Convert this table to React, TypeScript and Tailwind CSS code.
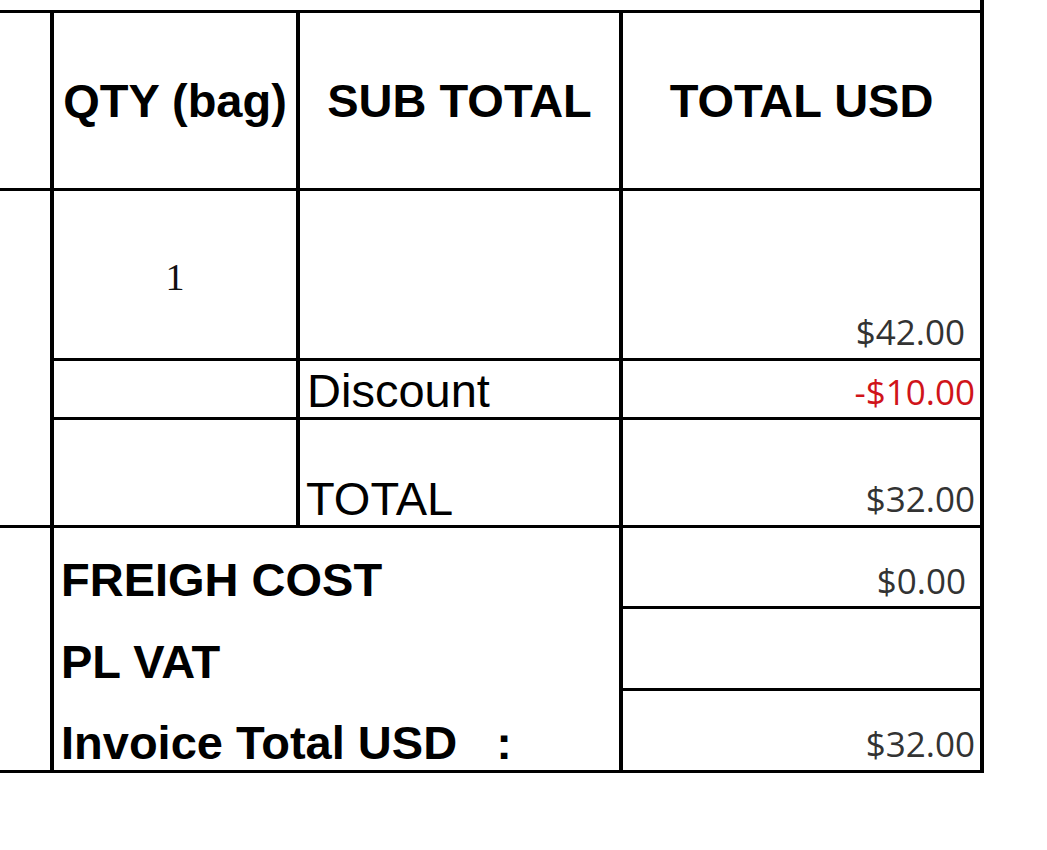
const head = "flex items-center justify-center bg-white font-['Liberation_Sans',Arial,sans-serif] text-[47px] font-bold leading-[46px] text-black";
const amount = "flex items-end justify-end bg-white font-['Open_Sans','Noto_Sans',sans-serif] text-[35px] leading-[35px] text-[#333]";
const label = "flex items-end bg-white font-['Liberation_Sans',Arial,sans-serif] text-[47px] leading-[46px] text-black";

export default function App() {
  return (
    <div className="min-h-[850px] bg-white">
      <div className="w-[984px] border-r-[4px] border-black pt-[10px]">
        <div className="grid grid-cols-[50px_242px_319px_357px] grid-rows-[175px_167px_56px_105px_78px_79px_79px] gap-x-[4px] gap-y-[3px] bg-black py-[3px]">
          {/* left strip */}
          <div className="bg-white" />
          <div className={head}>QTY (bag)</div>
          <div className={head}>SUB TOTAL</div>
          <div className={head}>TOTAL USD</div>

          <div className="row-span-3 bg-white" />
          <div className="flex justify-center bg-white pt-[67px] font-['Liberation_Serif','Times_New_Roman',serif] text-[38px] leading-[38px] text-[#111]">
            1
          </div>
          <div className="bg-white" />
          <div className={`${amount} pb-[9px] pr-[15px]`}>$42.00</div>

          <div className="bg-white" />
          <div className={`${label} pb-[3px] pl-[7px]`}>Discount</div>
          <div className={`${amount} pb-[8px] pr-[5px] text-[#d0141a]`}>-$10.00</div>

          <div className="bg-white" />
          <div className={`${label} pb-[3px] pl-[6px]`}>TOTAL</div>
          <div className={`${amount} pb-[9px] pr-[5px]`}>$32.00</div>

          {/* summary */}
          <div className="row-span-3 bg-white" />
          <div className="col-span-2 row-span-3 flex flex-col bg-white pl-[7px] font-['Liberation_Sans',Arial,sans-serif] text-[47px] font-bold leading-[46px] text-black">
            <div className="flex h-[81px] items-end pb-[6px]">FREIGH COST</div>
            <div className="flex h-[82px] items-end pb-[6px]">PL VAT</div>
            <div className="flex h-[79px] items-end pb-[4px] whitespace-pre">Invoice Total USD   :</div>
          </div>
          <div className={`${amount} pb-[8px] pr-[14px]`}>$0.00</div>
          <div className="bg-white" />
          <div className={`${amount} pb-[9px] pr-[5px]`}>$32.00</div>
        </div>
      </div>
    </div>
  );
}
